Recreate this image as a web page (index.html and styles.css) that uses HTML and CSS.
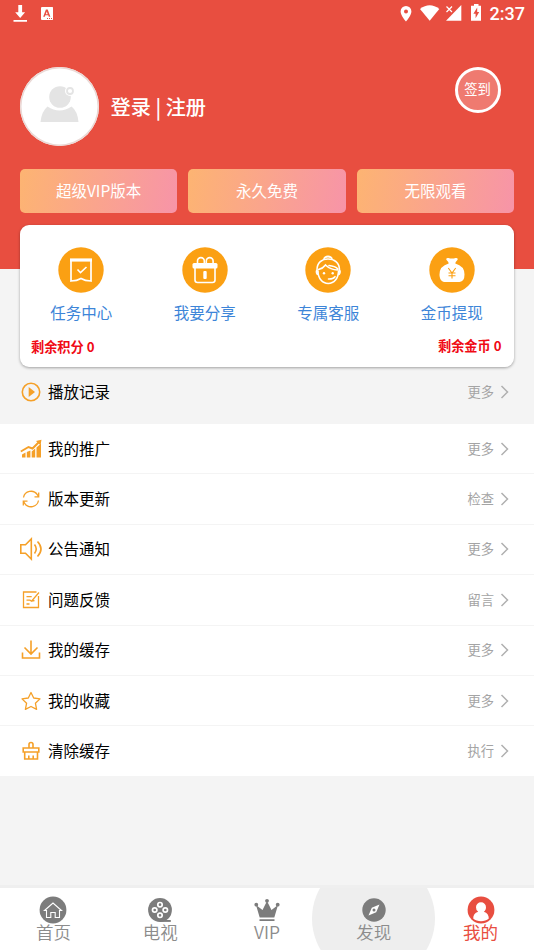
FILE: index.html
```html
<!DOCTYPE html>
<html lang="zh-CN">
<head>
<meta charset="utf-8">
<title>我的</title>
<link rel="stylesheet" href="styles.css">
</head>
<body>
<div class="app">
  <header class="hero">
    <div class="status">
      <svg class="st-left" width="60" height="28" viewBox="0 0 60 28" fill="#fff">
        <path d="M18.300 5h3.800v7.300h3L20.200 18l-5-5.700h3.100zM13.500 20h13.500v1.800H13.500z"/>
        <path fill-rule="evenodd" d="M42 7h10.500v13H42a1 1 0 0 1-1-1V8a1 1 0 0 1 1-1zm3.900 2.500-2.700 7.200h1.600l.5-1.400h3l.5 1.400h1.600l-2.700-7.200zm.9 2 .9 2.700h-1.900z"/>
        <path d="M52 7a1 1 0 0 1 1 1v11a1 1 0 0 1-1 1z"/>
        <path d="M47 18.500h1m1 0h1m1 0h1" stroke="#e84e40"/>
      </svg>
      <div class="st-right">
        <svg width="86" height="28" viewBox="0 0 86 28" fill="#fff">
          <path fill-rule="evenodd" d="M7 6a5.400 5.400 0 0 1 5.400 5.400C12.400 15.500 7 21.500 7 21.500S1.600 15.500 1.600 11.400A5.400 5.400 0 0 1 7 6zm0 3.500a2 2 0 1 0 0 4 2 2 0 0 0 0-4z"/>
          <path d="M21 9Q30.700 1.500 40.300 9L30.700 20.800z"/>
          <path d="M62.300 5v15.800H47z"/>
          <path d="m47.500 6.500 5.500 5.500m0-5.500-5.500 5.500" stroke="#fff" stroke-width="1.200"/>
          <path d="M75 4h4.500v1.700h2.500V20.800H72V5.700h3z"/>
          <path d="m78.200 7.500-3.800 6.300h2.200v4.500l3.600-6.200h-2z" fill="#e84e40"/>
        </svg>
        <span class="clock">2:37</span>
      </div>
    </div>
    <div class="profile">
      <div class="avatar">
        <svg width="80" height="80" viewBox="0 0 80 80">
          <path d="M20.500 55q1-10.500 7-15.500 12 8 24 0 6 4.500 7 15.500z" fill="#e4e4e4"/>
          <circle cx="40" cy="30" r="10.800" fill="#e4e4e4"/>
          <circle cx="50" cy="24" r="5" fill="#fff"/>
          <circle cx="50" cy="24" r="3" fill="none" stroke="#e4e4e4" stroke-width="1.800"/>
        </svg>
      </div>
      <div class="login">登录 | 注册</div>
      <div class="sign">签到</div>
    </div>
    <div class="perks">
      <div class="perk">超级VIP版本</div>
      <div class="perk">永久免费</div>
      <div class="perk">无限观看</div>
    </div>
  </header>

  <section class="card">
    <div class="actions">
      <div class="action">
        <svg width="46" height="46" viewBox="0 0 46 46"><circle cx="23" cy="23" r="22.700" fill="#fba013"/><g fill="none" stroke="#fff"><path d="M12 13h22" stroke-width="3.200"/><path d="M13 13v21q6-.2 10-2.600 4 2.400 10 2.600V13" stroke-width="1.700"/><path d="m19.500 22.500 3 3.200 6-5.700" stroke-width="1.600"/></g></svg>
        <span>任务中心</span>
      </div>
      <div class="action">
        <svg width="46" height="46" viewBox="0 0 46 46"><circle cx="23" cy="23" r="22.700" fill="#fba013"/><rect x="10.500" y="16" width="25" height="5.500" rx="1.500" fill="#fff"/><g fill="none" stroke="#fff" stroke-width="1.600"><path d="M13 21v12q0 2.500 2.500 2.500h15q2.500 0 2.500-2.500V21"/><path d="M15.500 16v-2a3.400 3.400 0 0 1 6.800 0v2m2 0v-2a3.400 3.400 0 0 1 6.800 0v2"/></g><rect x="21.300" y="24" width="3.400" height="8" rx="1" fill="#fff"/></svg>
        <span>我要分享</span>
      </div>
      <div class="action">
        <svg width="46" height="46" viewBox="0 0 46 46"><circle cx="23" cy="23" r="22.700" fill="#fba013"/><g fill="none" stroke="#fff" stroke-width="1.600" stroke-linecap="round"><path d="M12 23c0-7.500 5-11 11-11s11.500 3.500 11.500 11M13 24c0 7.500 4.500 12.500 10.200 12.500S33.500 31.500 33.500 24M12 23c-1.200 1.500-.5 4.500 1.300 4.800M34.500 23c1.200 1.500.5 4.500-1.300 4.800"/><path d="M19 12.300c-.2-4 8.200-4 8 0M20 10.500q3-1.800 6 0"/><path d="M13.500 22.500q4.500-1 7-4.500 5 4.800 12 5M24 18.500q6 .5 9 3.500M23.500 32q4.500.2 6.500-2.300"/></g><g fill="#fff"><circle cx="19" cy="26.200" r="1.200"/><circle cx="27.700" cy="26.200" r="1.200"/></g></svg>
        <span>专属客服</span>
      </div>
      <div class="action">
        <svg width="46" height="46" viewBox="0 0 46 46"><circle cx="23" cy="23" r="22.700" fill="#fba013"/><path d="M18 13.500c-1.500-1.500-.5-3 1.500-2.500 2 .8 5 .8 7 0 2-.5 3 1 1.500 2.500q-1.700 1.500-1.700 3 9.200 2.500 9.200 11 0 7-5 7.500H15.500c-4-.5-5-4.500-5-7.500q0-8.500 9.200-11 0-1.500-1.700-3z" fill="#fff"/><path d="m19.300 21 3.700 5 3.700-5M23 26v5.500M19.500 26h7m-7 2.700h7" fill="none" stroke="#fba013" stroke-width="1.100"/></svg>
        <span>金币提现</span>
      </div>
    </div>
    <div class="balance"><span>剩余积分 0</span><span class="coins">剩余金币 0</span></div>
  </section>

  <main class="list">
    <div class="row first">
      <svg class="ic" viewBox="0 0 24 24"><circle cx="12" cy="12" r="8.700"/><path class="f" d="M9.700 7v10l6.300-5z"/></svg>
      <span class="name">播放记录</span><span class="more">更多</span><svg class="chev" viewBox="0 0 10 16"><path d="m1.500 2 6 6-6 6"/></svg>
    </div>
    <div class="row">
      <svg class="ic" viewBox="0 0 24 24"><path class="f" d="M3 17.500 6.500 15.500V20.500H3zM7.800 15l3.600-1.500v7H7.800zM12.700 14.500l3.500-3v9h-3.500zM17.500 10.500 22 6.500v14h-4.500z"/><path d="M1.800 14.500 9.500 10l4 1.500 7-7" stroke-width="2"/><path class="f" d="m17 4 5.500-1.200-1 5.500z"/></svg>
      <span class="name">我的推广</span><span class="more">更多</span><svg class="chev" viewBox="0 0 10 16"><path d="m1.500 2 6 6-6 6"/></svg>
    </div>
    <div class="row">
      <svg class="ic thin" viewBox="0 0 24 24"><path d="M4.500 10.500a7.600 7.600 0 0 1 13.800-2.800l1.200 1.800M19.500 13.500a7.600 7.600 0 0 1-13.800 2.800l-1.200-1.800M19.700 5.500v4.300h-4.200M4.300 18.500v-4.300h4.200"/></svg>
      <span class="name">版本更新</span><span class="more">检查</span><svg class="chev" viewBox="0 0 10 16"><path d="m1.500 2 6 6-6 6"/></svg>
    </div>
    <div class="row">
      <svg class="ic" viewBox="0 0 24 24"><path d="M1.800 7.700h4.700L12.300 2v20l-5.800-5.700H1.800zM15.500 7.500q3.500 4.500 0 9M18.500 4.500q7 7.500 0 15"/></svg>
      <span class="name">公告通知</span><span class="more">更多</span><svg class="chev" viewBox="0 0 10 16"><path d="m1.500 2 6 6-6 6"/></svg>
    </div>
    <div class="row">
      <svg class="ic thin" viewBox="0 0 24 24"><path d="M17.500 4H4.500v15.500h15V8M7.500 8.700h5.200M7.500 12.200h3.500l1.500 1 7.500-8.700M12.500 13.200l3-.7M7.500 16h3"/></svg>
      <span class="name">问题反馈</span><span class="more">留言</span><svg class="chev" viewBox="0 0 10 16"><path d="m1.500 2 6 6-6 6"/></svg>
    </div>
    <div class="row">
      <svg class="ic" viewBox="0 0 24 24"><path d="M12 2.500v13.500M5.500 9.500l6.500 6.500 6.500-6.500M3.500 14.500v5.500h17v-5.500"/></svg>
      <span class="name">我的缓存</span><span class="more">更多</span><svg class="chev" viewBox="0 0 10 16"><path d="m1.500 2 6 6-6 6"/></svg>
    </div>
    <div class="row">
      <svg class="ic thin" viewBox="0 0 24 24"><path stroke-linejoin="round" d="m12 3.500 2.700 5.500 6.300.9-4.600 4.300 1.200 6.200L12 17.500l-5.600 2.900 1.200-6.200L3 9.900l6.300-.9z"/></svg>
      <span class="name">我的收藏</span><span class="more">更多</span><svg class="chev" viewBox="0 0 10 16"><path d="m1.500 2 6 6-6 6"/></svg>
    </div>
    <div class="row">
      <svg class="ic" viewBox="0 0 24 24"><path d="M10 9V5.500a2 2 0 0 1 4 0V9M4.200 9h15.600v4H4.200zM5.700 13v7h12.800v-7M9.800 20v-3.500M14.200 20v-3.500"/></svg>
      <span class="name">清除缓存</span><span class="more">执行</span><svg class="chev" viewBox="0 0 10 16"><path d="m1.500 2 6 6-6 6"/></svg>
    </div>
  </main>

  <nav class="tabs">
    <div class="tab">
      <svg width="28" height="28" viewBox="0 0 28 28"><circle cx="14" cy="14" r="13.400" fill="#7c7c7c"/><path d="m5.500 14.500 8.500-7.500 8.500 7.500h-2V21.500h-4.300v-5h-4.400v5H7.500v-7z" fill="none" stroke="#fff" stroke-width="1.100"/></svg>
      <span>首页</span>
    </div>
    <div class="tab">
      <svg width="28" height="28" viewBox="0 0 28 28"><circle cx="14" cy="14" r="11.900" fill="#7c7c7c"/><path d="M14 24h10.800v1.900H14z" fill="#7c7c7c"/><g fill="#7c7c7c" stroke="#fff" stroke-width="1.700"><circle cx="14" cy="8.700" r="2.200"/><circle cx="8.700" cy="14" r="2.200"/><circle cx="19.300" cy="14" r="2.200"/><circle cx="14" cy="19.300" r="2.200"/></g></svg>
      <span>电视</span>
    </div>
    <div class="tab">
      <svg width="28" height="28" viewBox="0 0 28 28" fill="#7c7c7c"><path d="m3 9 6.500 5L14 5l4.500 9L25 9l-3.700 12.500H6.700zM6.500 23.200h15V25h-15z"/><circle cx="3.300" cy="8.700" r="1.900"/><circle cx="14" cy="4.800" r="1.900"/><circle cx="24.700" cy="8.700" r="1.900"/></svg>
      <span>VIP</span>
    </div>
    <div class="tab pressed">
      <svg width="28" height="28" viewBox="0 0 28 28"><circle cx="14" cy="14" r="11.700" fill="#7c7c7c"/><path fill-rule="evenodd" d="m19.500 8.500-3.300 7.700-7.700 3.300 3.300-7.700zM14 12.500a1.500 1.500 0 1 0 0 3 1.500 1.500 0 0 0 0-3z" fill="#fff"/></svg>
      <span>发现</span>
    </div>
    <div class="tab active">
      <svg width="28" height="28" viewBox="0 0 28 28"><circle cx="14" cy="14" r="13.400" fill="#e84e40"/><path d="M14 6.200a5 5 0 0 1 5 5c0 2-.9 3.700-2.200 4.600 3.500 1 5 3.500 5 6.700-4 3.700-11.600 3.700-15.600 0 0-3.200 1.500-5.700 5-6.700A5.500 5.500 0 0 1 9 11.200a5 5 0 0 1 5-5z" fill="#fff"/></svg>
      <span>我的</span>
    </div>
  </nav>
</div>
</body>
</html>
```
FILE: styles.css
```css
* { box-sizing: border-box; }
body {
  margin: 0;
  background: #f4f4f4;
  font-family: "Noto Sans CJK SC", "Noto Sans", sans-serif;
  color: #000;
}
svg { display: block; flex: none; }
.app {
  display: flex;
  flex-direction: column;
  width: 534px;
  height: 950px;
  overflow: hidden;
}
.hero {
  flex: none;
  height: 268.500px;
  background: #e84e40;
  color: #fff;
}
.status { display: flex; justify-content: space-between; height: 28px; }
.st-right { display: flex; gap: 5px; padding-right: 9px; }
.clock { font: 500 18px/28px Roboto, sans-serif; }
.profile {
  display: flex;
  align-items: center;
  height: 79px;
  margin: 39px 33.500px 0 20px;
}
.avatar {
  width: 79px;
  height: 79px;
  border-radius: 50%;
  background: #fff;
  box-shadow: inset 0 0 0 1.500px #ead9d6;
}
.login { margin-left: 11.500px; font-size: 20.200px; line-height: 28px; font-weight: 500; }
.sign {
  align-self: flex-start;
  width: 46px;
  height: 46px;
  margin-left: auto;
  border: 3.500px solid #fff;
  border-radius: 50%;
  background: #ef7a70;
  font-size: 13.300px;
  line-height: 38px;
  text-align: center;
}
.perks {
  display: grid;
  grid-template-columns: repeat(3, 1fr);
  gap: 11.300px;
  margin: 22.500px 20px 0;
}
.perk {
  height: 44.500px;
  border-radius: 5px;
  background: linear-gradient(100deg, #fdb472, #f794a8);
  font-size: 15.500px;
  line-height: 42px;
  text-align: center;
}
.card {
  position: relative;
  flex: none;
  height: 142px;
  margin: -43.500px 20px 0;
  padding: 22px 0 0;
  border-radius: 9px;
  background: #fff;
  box-shadow: 0 1px 3px rgba(0, 0, 0, .35);
}
.actions { display: grid; grid-template-columns: repeat(4, 1fr); margin: 0 .5px 0 -.5px; }
.action { display: flex; flex-direction: column; align-items: center; gap: 7px; }
.action span { font-size: 15.500px; line-height: 24px; color: #3d85d8; }
.balance {
  display: flex;
  justify-content: space-between;
  padding: 13px 12.500px 0 11px;
  font-size: 13.200px;
  line-height: 20px;
  font-weight: 700;
  color: #f00a14;
}
.coins { margin-top: -1px; }
.row {
  display: flex;
  align-items: center;
  height: 50.400px;
  padding: 0 24px 0 19px;
  border-bottom: 1.500px solid #f4f4f4;
  background: #fff;
}
.first { height: 57px; padding-bottom: 8px; border: 0; background: #f4f4f4; }
.ic {
  width: 24px;
  height: 24px;
  fill: none;
  stroke: #f5a028;
  stroke-width: 1.600;
}
.thin { stroke-width: 1.300; }
.ic .f { fill: #f5a028; stroke: none; }
.name { margin-left: 5px; padding-bottom: 2px; font-size: 15.500px; line-height: 24px; }
.more { margin-left: auto; font-size: 13.300px; line-height: 20px; color: #a4a4a4; }
.chev {
  width: 10px;
  height: 16px;
  margin-left: 6px;
  fill: none;
  stroke: #b0b0b0;
  stroke-width: 1.500;
}
.tabs {
  display: grid;
  grid-template-columns: repeat(5, 1fr);
  height: 65px;
  margin-top: auto;
  border-top: 3px solid #efefef;
  background: #fff;
  overflow: hidden;
}
.tab {
  position: relative;
  display: flex;
  flex-direction: column;
  align-items: center;
  padding-top: 8px;
  color: #8c8c8c;
  font-size: 17.500px;
  font-weight: 350;
}
.tab span { margin-top: -5px; line-height: 25px; }
.tab svg, .tab span { position: relative; }
.pressed::before {
  content: "";
  position: absolute;
  top: -31px;
  left: 50%;
  width: 123px;
  height: 123px;
  margin-left: -61.500px;
  border-radius: 50%;
  background: #eee;
}
.active { color: #e84e40; font-weight: 400; }
```
